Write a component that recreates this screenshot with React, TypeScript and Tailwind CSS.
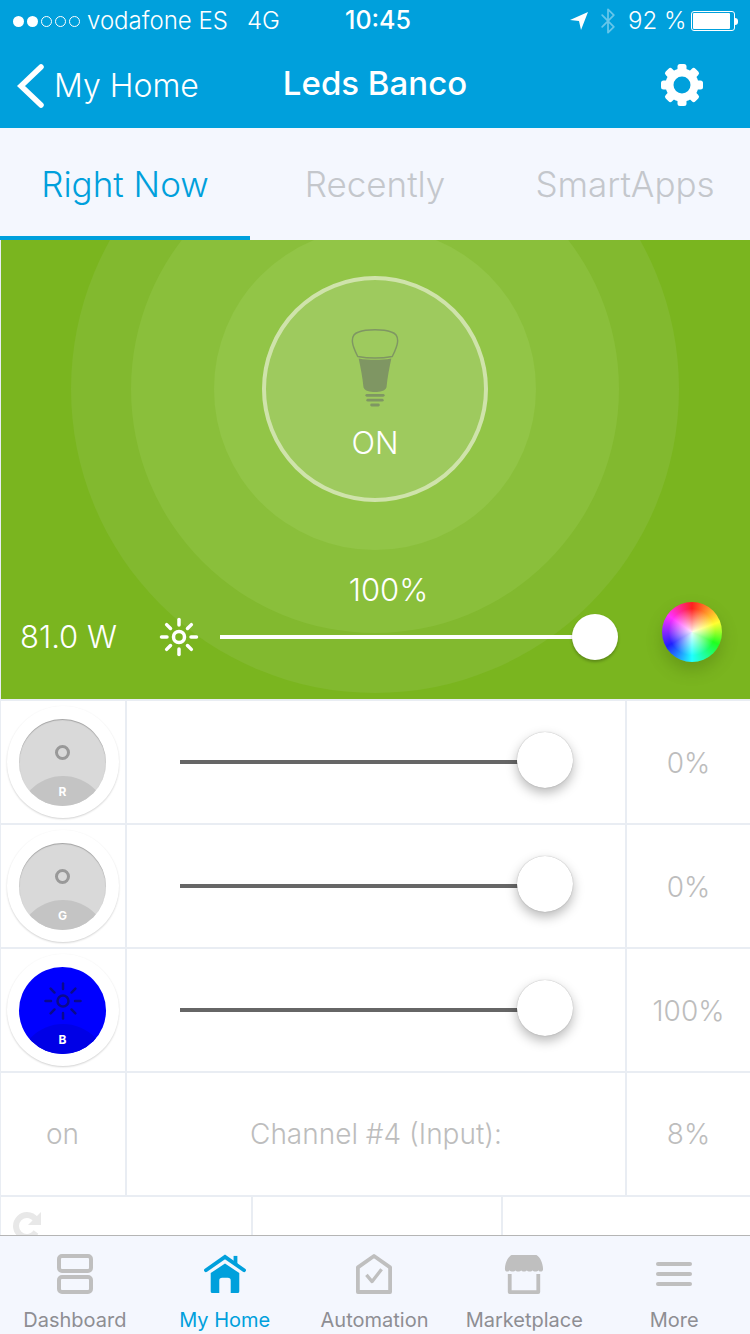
import React from 'react';
import { Bluetooth } from 'lucide-react';

const font = { fontFamily: 'Inter, "Liberation Sans", sans-serif' };

const Gear = () => (
  <svg width="44" height="44" viewBox="0 0 44 44" fill="none">
    <circle cx="22" cy="22" r="12.5" stroke="#fff" strokeWidth="8" />
    {[0, 45, 90, 135, 180, 225, 270, 315].map((a) => (
      <rect key={a} x="17.5" y="1" width="9" height="9" rx="2.5" fill="#fff" transform={`rotate(${a} 22 22)`} />
    ))}
  </svg>
);

const Sun = ({ size, color, sw }: { size: number; color: string; sw: number }) => (
  <svg width={size} height={size} viewBox="0 0 40 40" fill="none" stroke={color} strokeWidth={sw} strokeLinecap="round">
    <circle cx="20" cy="20" r="5.5" />
    {[0, 45, 90, 135, 180, 225, 270, 315].map((a) => (
      <line key={a} x1="20" y1="2.5" x2="20" y2="8" transform={`rotate(${a} 20 20)`} />
    ))}
  </svg>
);

const Bulb = () => (
  <svg width="48" height="82" viewBox="0 0 50 82" fill="none">
    <path d="M8 3.5C16 0.5 34 0.5 42 3.5C47 5 49 9 48.5 14C48 19 45 25 43 29C32 31 18 31 7 29C5 25 2 19 1.5 14C1 9 3 5 8 3.5Z" stroke="#7f9663" strokeWidth="1.5" />
    <path d="M8 31C19 33 31 33 42 31C40 41 38 50 37 61C36 65 30 66 25 66C20 66 14 65 13 61C12 50 10 41 8 31Z" fill="#7f9663" />
    <rect x="15" y="68" width="20" height="3" rx="1.5" fill="#7f9663" />
    <rect x="16" y="73" width="18" height="3" rx="1.5" fill="#7f9663" />
    <rect x="20" y="78" width="10" height="3" rx="1.5" fill="#7f9663" />
  </svg>
);

const Channel = ({ letter, active }: { letter: string; active?: boolean }) => (
  <div className="flex h-[112px] w-[112px] items-center justify-center rounded-full bg-white shadow-[0_1px_2px_rgba(0,0,0,0.18)]">
    <div className={`relative h-[87px] w-[87px] overflow-hidden rounded-full ${active ? 'bg-[#0000ff]' : 'bg-[#d9d9d9] shadow-[inset_0_1px_1px_rgba(0,0,0,0.25)]'}`}>
      <div className={`absolute left-[-1px] top-[57px] h-[90px] w-[90px] rounded-full ${active ? 'bg-[#0000e6]' : 'bg-[#c4c4c4]'}`} />
      <div className="absolute inset-x-0 top-[14px] flex h-[40px] items-center justify-center">
        {active ? (
          <Sun size={40} color="#0a0a8c" sw={2.5} />
        ) : (
          <div className="h-[15px] w-[15px] rounded-full border-[3px] border-[#999]" />
        )}
      </div>
      <span className="absolute inset-x-0 top-[66px] text-center text-[12px] font-bold leading-[14px] text-white">{letter}</span>
    </div>
  </div>
);

const SliderRow = ({ letter, value, active }: { letter: string; value: string; active?: boolean }) => (
  <div className="grid h-[124px] grid-cols-[127px_500px_123px] border-b-2 border-[#e9edf3]">
    <div className="flex items-center justify-center border-r-2 border-l-[1px] border-[#e9edf3] pr-[1px]">
      <Channel letter={letter} active={active} />
    </div>
    <div className="flex items-center border-r-2 border-[#e9edf3] pl-[53px]">
      <div className="h-[4px] w-[340px] bg-[#666]" />
      <div className="ml-[-3px] mt-[-4px] h-[56px] w-[56px] rounded-full bg-white shadow-[0_5px_12px_rgba(0,0,0,0.28),0_0_1px_rgba(0,0,0,0.35)]" />
    </div>
    <div className="flex items-center justify-center pt-[2px] text-[28px] font-light text-[#bdbdbd]">{value}</div>
  </div>
);

const TabIcon = ({ name }: { name: string }) => {
  const grey = '#bfbfbf';
  if (name === 'Dashboard') {
    return (
      <svg width="36" height="40" viewBox="0 0 36 40" fill="none" stroke={grey} strokeWidth="4">
        <rect x="2" y="2" width="32" height="15" rx="3" />
        <rect x="2" y="23" width="32" height="15" rx="3" />
      </svg>
    );
  }
  if (name === 'My Home') {
    return (
      <svg width="42" height="40" viewBox="0 0 44 42" fill="#00a0dc">
        <path d="M31 2h4v9h-4z" />
        <path d="M2 17L22 3L42 17" fill="none" stroke="#00a0dc" strokeWidth="4" strokeLinecap="round" strokeLinejoin="miter" />
        <path fillRule="evenodd" d="M7 20L22 10L37 20V39C37 40.500 36 41 35 41H28V28C28 26 27 25 25 25H19C17 25 16 26 16 28V41H9C8 41 7 40.500 7 39Z" />
      </svg>
    );
  }
  if (name === 'Automation') {
    return (
      <svg width="36" height="40" viewBox="0 0 38 42" fill="none" stroke={grey} strokeWidth="4" strokeLinejoin="round">
        <path d="M2 14L19 2L36 14V40H2Z" />
        <path d="M11 22L17 29L27 16" strokeWidth="3.500" />
      </svg>
    );
  }
  if (name === 'Marketplace') {
    return (
      <svg width="40" height="40" viewBox="0 0 42 42" fill="none">
        <path d="M8 1H34C38 3 41 10 41 16C41 19 37 19 36 17C35 19 31 19 30 17C29 19 25 19 24 17C23 19 19 19 18 17C17 19 13 19 12 17C11 19 7 19 6 17C5 19 1 19 1 16C1 10 4 3 8 1Z" fill={grey} />
        <path d="M6 21V40H36V21" stroke={grey} strokeWidth="4" strokeLinejoin="round" />
      </svg>
    );
  }
  return (
    <svg width="36" height="40" viewBox="0 0 36 40" fill={grey}>
      <rect x="0" y="8" width="36" height="4" rx="2" />
      <rect x="0" y="18" width="36" height="4" rx="2" />
      <rect x="0" y="28" width="36" height="4" rx="2" />
    </svg>
  );
};

const tabs = ['Dashboard', 'My Home', 'Automation', 'Marketplace', 'More'];

export default function App() {
  return (
    <div className="flex h-[1334px] w-[750px] flex-col overflow-hidden bg-white" style={font}>
      {/* status bar + nav */}
      <div className="h-[128px] shrink-0 bg-[#00a0dc] text-white">
        <div className="flex h-[40px] items-center pl-[13px] pt-[2px] text-[24px] font-light">
          <div className="flex gap-[3px]">
            <span className="h-[11px] w-[11px] rounded-full bg-white" />
            <span className="h-[11px] w-[11px] rounded-full bg-white" />
            <span className="h-[11px] w-[11px] rounded-full border border-white" />
            <span className="h-[11px] w-[11px] rounded-full border border-white" />
            <span className="h-[11px] w-[11px] rounded-full border border-white" />
          </div>
          <span className="ml-[7px] w-[160px]">vodafone ES</span>
          <span className="w-[98px]">4G</span>
          <span className="w-[225px] text-[25px] font-medium">10:45</span>
          <svg width="18" height="18" viewBox="0 0 18 18" fill="#fff">
            <path d="M18 0L0 8L9 9L11 18Z" />
          </svg>
          <Bluetooth size={28} className="ml-[6px] text-white/40" strokeWidth={1.5} />
          <span className="ml-[6px] w-[63px] whitespace-nowrap">92 %</span>
          <div className="flex h-[20px] w-[44px] items-center rounded-[3px] border border-white p-[1px]">
            <div className="h-full w-[92%] rounded-[1px] bg-white" />
          </div>
          <div className="h-[7px] w-[3px] rounded-r-sm bg-white" />
        </div>
        <div className="relative flex h-[88px] items-center justify-center">
          <div className="absolute left-[16px] top-[22px] flex items-center">
            <svg width="30" height="44" viewBox="0 0 30 44" fill="none" stroke="#fff" strokeWidth="5.500" strokeLinecap="round">
              <path d="M25 3L5 22L25 41" />
            </svg>
            <span className="ml-[8px] text-[32px] font-light">My Home</span>
          </div>
          <span className="text-[33px] font-medium">Leds Banco</span>
          <div className="absolute right-[46px] top-[23px]">
            <Gear />
          </div>
        </div>
      </div>

      {/* segmented tabs */}
      <div className="grid h-[112px] shrink-0 grid-cols-3 bg-[#f4f7fe] text-[35px] font-light text-[#c4c7cc]">
        <div className="flex items-center justify-center border-b-4 border-[#00a0dc] pt-[4px] text-[#00a0dc]">Right Now</div>
        <div className="flex items-center justify-center">Recently</div>
        <div className="flex items-center justify-center">SmartApps</div>
      </div>

      {/* main tile */}
      <div className="relative h-[461px] shrink-0 overflow-hidden border-b-2 border-l-[1px] border-[#e9edf3] bg-[#7ab51f]">
        <div className="absolute left-[70px] top-[-155px] h-[608px] w-[608px] rounded-full bg-[#82b92f]" />
        <div className="absolute left-[130px] top-[-95px] h-[488px] w-[488px] rounded-full bg-[#8abf3b]" />
        <div className="absolute left-[213px] top-[-12px] h-[322px] w-[322px] rounded-full bg-[#92c547]" />
        <div className="relative flex h-[459px] flex-col items-center text-white">
          <div className="mr-[1px] mt-[36px] flex h-[226px] w-[226px] flex-col items-center rounded-full border-[4px] border-[#cfe3ab] bg-[#9eca5e] pt-[47px]">
            <Bulb />
            <span className="mt-[16px] text-[31px] font-light leading-[36px]">ON</span>
          </div>
          <span className="ml-[26px] mt-[70px] text-[31px] font-light leading-[36px]">100%</span>
          <div className="mt-[4px] flex w-full items-center pl-[19px]">
            <span className="w-[139px] text-[31px] font-light leading-[46px]">81.0 W</span>
            <Sun size={40} color="#fff" sw={3.5} />
            <div className="ml-[21px] h-[4px] w-[356px] bg-white" />
            <div className="ml-[-4px] h-[46px] w-[46px] rounded-full bg-white shadow-[0_2px_3px_rgba(0,0,0,0.25)]" />
            <div
              className="ml-[44px] mt-[-10px] h-[60px] w-[60px] rounded-full shadow-[0_8px_16px_rgba(60,90,10,0.3)]"
              style={{
                background:
                  'radial-gradient(circle, rgba(255,255,255,0.9) 0%, rgba(255,255,255,0) 55%), conic-gradient(#ff2020, #ffff30 70deg, #20ff20 115deg, #20ffff 180deg, #2020ff 240deg, #ff30ff 305deg, #ff2020)',
              }}
            />
          </div>
        </div>
      </div>

      {/* channels */}
      <div className="min-h-0 flex-1 overflow-hidden">
        <SliderRow letter="R" value="0%" />
        <SliderRow letter="G" value="0%" />
        <SliderRow letter="B" value="100%" active />
        <div className="grid h-[124px] grid-cols-[127px_500px_123px] border-b-2 border-[#e9edf3] text-[28px] font-light text-[#bdbdbd]">
          <div className="flex items-center justify-center border-r-2 border-l-[1px] border-[#e9edf3] pr-[1px]">on</div>
          <div className="flex items-center justify-center border-r-2 border-[#e9edf3]">Channel #4 (Input):</div>
          <div className="flex items-center justify-center">8%</div>
        </div>
        <div className="grid h-[60px] grid-cols-[253px_250px_247px]">
          <div className="border-r-2 border-l-[1px] border-[#e9edf3] pl-[11px] pt-[14px]">
            <svg width="30" height="30" viewBox="0 0 30 30" fill="none" stroke="#e8e8e8" strokeWidth="6">
              <path d="M24 21C21 25 18 26 15 26C9 26 4 21 4 15C4 9 9 4 15 4C19 4 22 6 24 9" />
              <path d="M29 1V14H16Z" fill="#e8e8e8" stroke="none" />
            </svg>
          </div>
          <div className="border-r-2 border-[#e9edf3]" />
          <div />
        </div>
      </div>

      {/* tab bar */}
      <div className="grid h-[99px] shrink-0 grid-cols-5 border-t border-[#b5b5b5] bg-[#f4f7fe] pr-[1px]">
        {tabs.map((t) => (
          <div key={t} className="flex flex-col items-center pt-[18px]">
            <div className="flex h-[40px] items-center">
              <TabIcon name={t} />
            </div>
            <span className={`mt-[14px] text-[20px] leading-[24px] ${t === 'My Home' ? 'text-[#00a0dc]' : 'text-[#8e8e93]'}`}>{t}</span>
          </div>
        ))}
      </div>
    </div>
  );
}
